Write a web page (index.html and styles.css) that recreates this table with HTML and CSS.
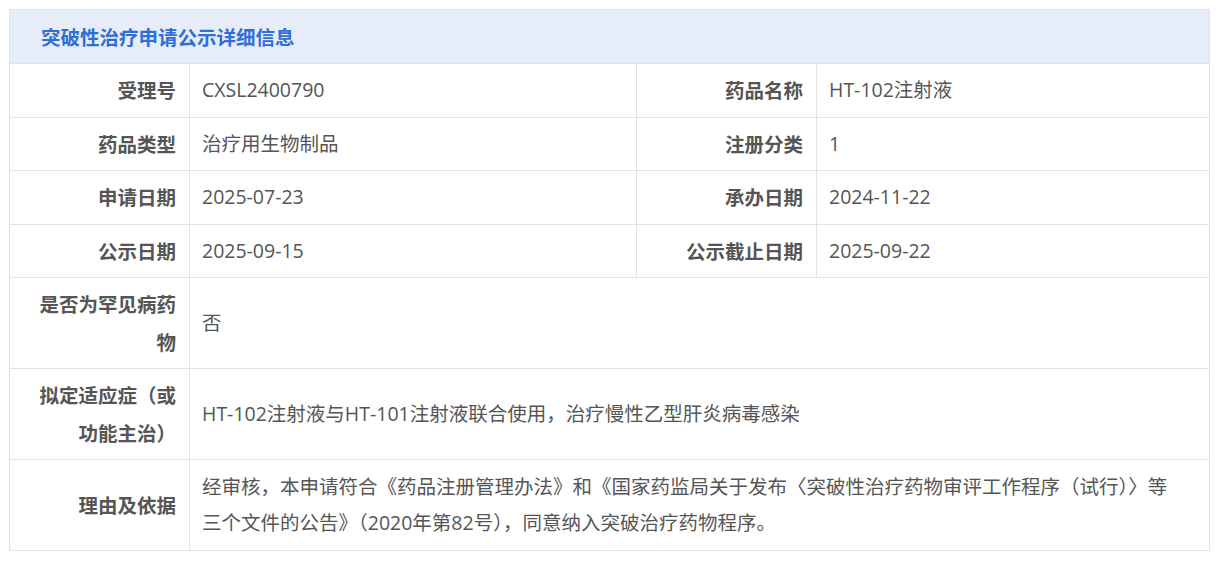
FILE: index.html
```html
<!DOCTYPE html>
<html lang="zh-CN">
<head>
<meta charset="utf-8">
<title>突破性治疗申请公示详细信息</title>
<link rel="stylesheet" href="styles.css">
</head>
<body>
<div class="wrap">
<table class="info">
  <colgroup>
    <col class="c-label1"><col class="c-value1"><col class="c-label2"><col class="c-value2">
  </colgroup>
  <thead>
    <tr><th colspan="4" class="title">突破性治疗申请公示详细信息</th></tr>
  </thead>
  <tbody>
    <tr class="single">
      <th class="label">受理号</th><td class="value">CXSL2400790</td>
      <th class="label">药品名称</th><td class="value">HT-102注射液</td>
    </tr>
    <tr class="single">
      <th class="label">药品类型</th><td class="value">治疗用生物制品</td>
      <th class="label">注册分类</th><td class="value">1</td>
    </tr>
    <tr class="single">
      <th class="label">申请日期</th><td class="value">2025-07-23</td>
      <th class="label">承办日期</th><td class="value">2024-11-22</td>
    </tr>
    <tr class="single">
      <th class="label">公示日期</th><td class="value">2025-09-15</td>
      <th class="label">公示截止日期</th><td class="value">2025-09-22</td>
    </tr>
    <tr>
      <th class="label">是否为罕见病药物</th><td class="value" colspan="3">否</td>
    </tr>
    <tr>
      <th class="label">拟定适应症（或功能主治）</th><td class="value" colspan="3">HT-102注射液与HT-101注射液联合使用，治疗慢性乙型肝炎病毒感染</td>
    </tr>
    <tr>
      <th class="label">理由及依据</th><td class="value long" colspan="3">经审核，本申请符合《药品注册管理办法》和《国家药监局关于发布〈突破性治疗药物审评工作程序（试行）〉等<br>三个文件的公告》（2020年第82号），同意纳入突破治疗药物程序。</td>
    </tr>
  </tbody>
</table>
</div>
</body>
</html>
```
FILE: styles.css
```css
html, body {
  margin: 0;
  padding: 0;
  background: #ffffff;
}
body {
  font-family: "Open Sans", "Noto Sans CJK SC", sans-serif;
  color: #555555;
}
.wrap {
  padding: 9px;
}
.info {
  width: 1200px;
  border-collapse: collapse;
  table-layout: fixed;
  font-size: 19.5px;
}
.c-label1 { width: 180px; }
.c-value1 { width: 447px; }
.c-label2 { width: 180px; }
.c-value2 { width: 393px; }
.info th, .info td {
  border: 1px solid #e3e3e3;
}
.title {
  background: #e6edf8;
  color: #2c6fd9;
  text-align: left;
  font-weight: bold;
  font-family: "Noto Sans CJK SC", sans-serif;
  font-size: 19.5px;
  height: 53px;
  padding: 0 0 0 31px;
  line-height: 53px;
}
.label {
  text-align: right;
  font-weight: bold;
  font-family: "Noto Sans CJK SC", sans-serif;
  color: #555555;
  line-height: 38px;
  padding: 7px 13px 7px 16px;
  vertical-align: middle;
}
.single .label {
  padding-top: 7.25px;
  padding-bottom: 7.25px;
}
.value {
  text-align: left;
  font-weight: normal;
  color: #555555;
  line-height: 36px;
  padding: 7px 12px;
  vertical-align: middle;
}
.value.long {
  padding-top: 9px;
  padding-bottom: 9px;
}
```
